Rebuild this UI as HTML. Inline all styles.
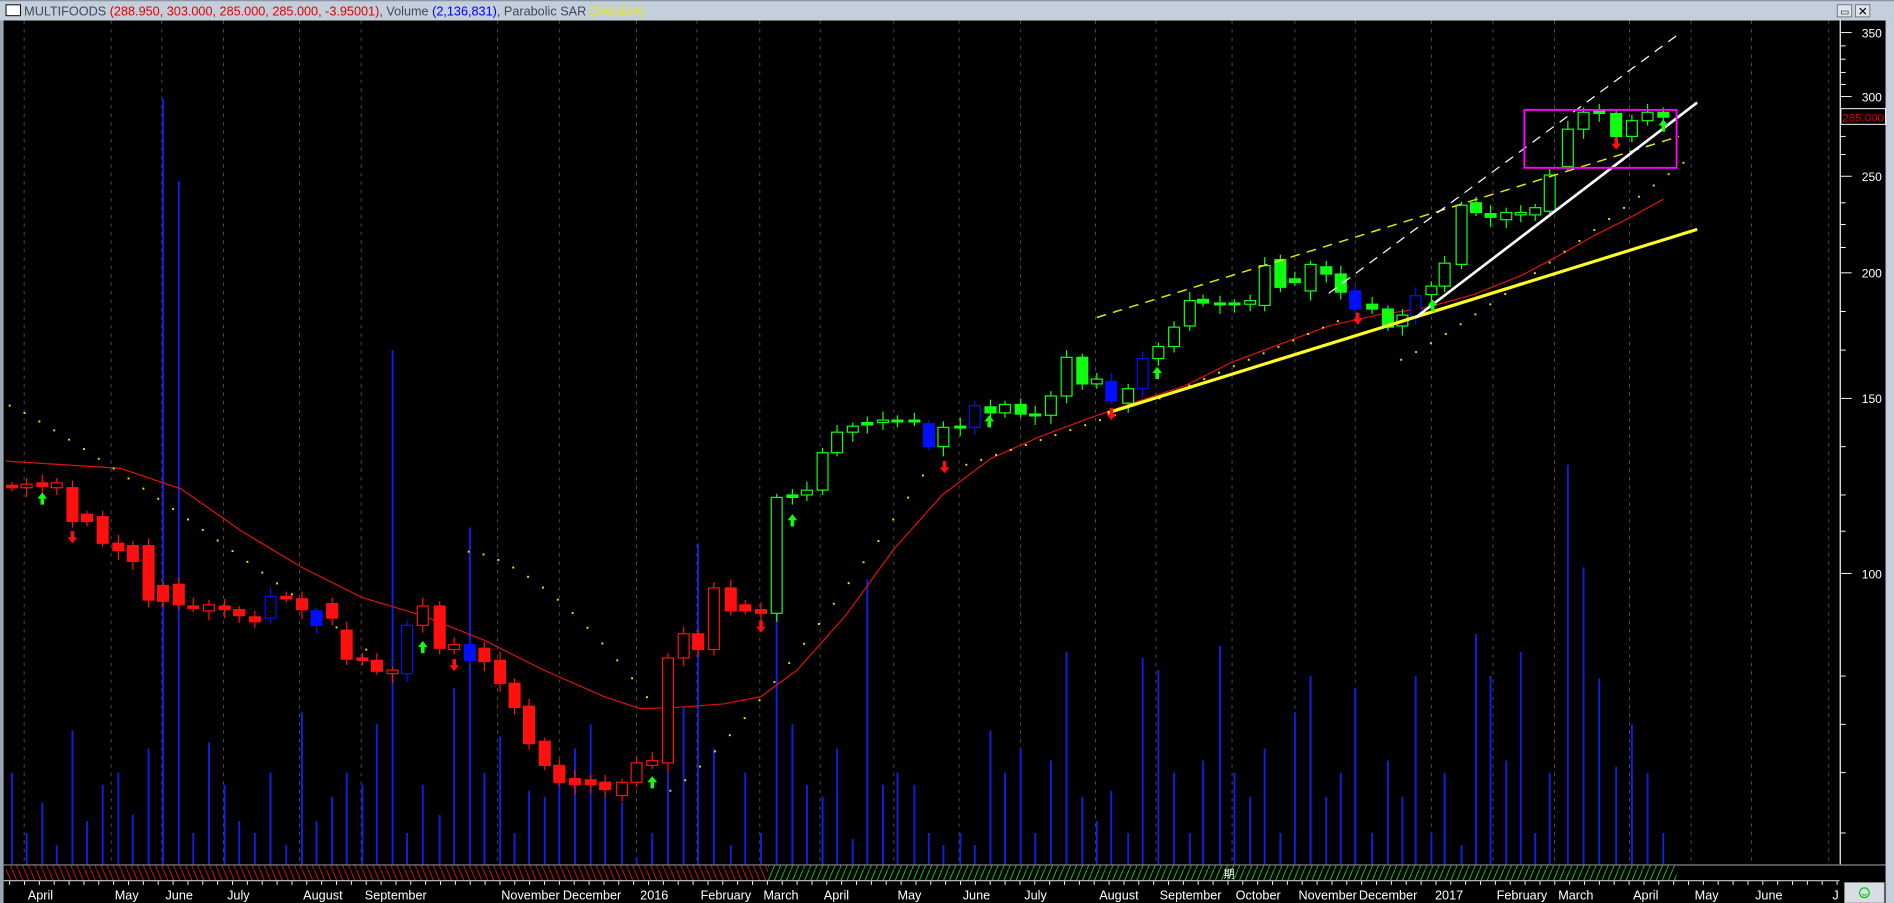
<!DOCTYPE html>
<html><head><meta charset="utf-8">
<style>
html,body{margin:0;padding:0;background:#000;width:1894px;height:903px;overflow:hidden}
svg{display:block}
text{font-family:"Liberation Sans",sans-serif}
</style></head>
<body>
<svg id="c" width="1894" height="903" viewBox="0 0 1568 748" preserveAspectRatio="none" xmlns="http://www.w3.org/2000/svg">
<defs>
<pattern id="hr" width="5" height="12" patternUnits="userSpaceOnUse"><rect width="5" height="12" fill="#000"/><line x1="0" y1="0" x2="5" y2="12" stroke="#e01010" stroke-width="0.8"/></pattern>
<pattern id="hg" width="5" height="12" patternUnits="userSpaceOnUse"><rect width="5" height="12" fill="#000"/><line x1="5" y1="0" x2="0" y2="12" stroke="#10d010" stroke-width="0.8"/></pattern>
</defs>
<rect width="1568" height="748" fill="#000"/>
<rect x="0" y="0" width="1568" height="17" fill="#c4cfdc"/>
<line x1="0" y1="0.5" x2="1568" y2="0.5" stroke="#8a96a4"/>
<rect x="5" y="4" width="12" height="9" fill="#fff" stroke="#000" stroke-width="0.8"/>
<text x="20" y="13" font-size="10.5" fill="#404858">MULTIFOODS <tspan fill="#e00000">(288.950, 303.000, 285.000, 285.000, -3.95001)</tspan>, Volume <tspan fill="#0000ee">(2,136,831)</tspan>, Parabolic SAR <tspan fill="#e8e800">(249.814)</tspan></text>
<rect x="1521" y="4" width="12" height="10" fill="#dfe5ec" stroke="#555" stroke-width="0.6"/>
<rect x="1536" y="4" width="12" height="10" fill="#dfe5ec" stroke="#555" stroke-width="0.6"/>
<text x="1523.5" y="12.5" font-size="8" fill="#000">▭</text>
<text x="1538" y="13" font-size="10" fill="#000">✕</text>
<rect x="0" y="17" width="3" height="731" fill="#9aa4b0"/>
<rect x="1561" y="17" width="7" height="731" fill="#c4cfdc"/>
<g id="grid" stroke="#555" stroke-width="0.7" stroke-dasharray="3,4"></g>
<g id="vol"></g>
<g id="ma"></g>
<g id="sar" fill="#e8e800"></g>
<g id="cand"></g>
<line x1="908" y1="263" x2="1390" y2="113" stroke="#e8e800" stroke-width="1.2" stroke-dasharray="8,6"/>
<line x1="1100" y1="243" x2="1390" y2="28" stroke="#fff" stroke-width="1" stroke-dasharray="8,6"/>
<line x1="917" y1="342" x2="1405" y2="190" stroke="#ffff20" stroke-width="2.6"/>
<line x1="1172" y1="263" x2="1405" y2="85" stroke="#fff" stroke-width="2.2"/>
<rect x="1262" y="91" width="126" height="48" fill="none" stroke="#ff00ff" stroke-width="1.6"/>
<g id="arr"></g>
<line x1="3" y1="716.5" x2="1561" y2="716.5" stroke="#888"/>
<rect x="5" y="717" width="631" height="12" fill="url(#hr)"/>
<rect x="636" y="717" width="752" height="12" fill="url(#hg)"/>
<text x="1013" y="727" font-size="9" fill="#fff">期</text>
<line x1="3" y1="729.5" x2="1523" y2="729.5" stroke="#ccc"/>
<g id="xt" stroke="#fff" stroke-width="0.8"></g>
<g font-size="10.5" fill="#fff" id="xl">
<text x="23" y="745">April</text><text x="95" y="745">May</text><text x="137" y="745">June</text><text x="188" y="745">July</text><text x="251" y="745">August</text><text x="302" y="745">September</text><text x="415" y="745">November</text><text x="466" y="745">December</text><text x="530" y="745">2016</text><text x="580" y="745">February</text><text x="632" y="745">March</text><text x="682" y="745">April</text><text x="743" y="745">May</text><text x="797" y="745">June</text><text x="848" y="745">July</text><text x="910" y="745">August</text><text x="960" y="745">September</text><text x="1023" y="745">October</text><text x="1075" y="745">November</text><text x="1125" y="745">December</text><text x="1188" y="745">2017</text><text x="1239" y="745">February</text><text x="1290" y="745">March</text><text x="1352" y="745">April</text><text x="1403" y="745">May</text><text x="1453" y="745">June</text><text x="1517" y="745">J</text>
</g>
<line x1="1523.5" y1="17" x2="1523.5" y2="716" stroke="#fff"/>
<g id="yt" stroke="#fff" stroke-width="0.8"></g>
<g font-size="10" fill="#fff" text-anchor="end">
<text x="1558" y="31">350</text><text x="1558" y="84">300</text><text x="1558" y="150">250</text><text x="1558" y="230">200</text><text x="1558" y="334">150</text><text x="1558" y="479">100</text>
</g>
<rect x="1524" y="90" width="37" height="13" fill="#000" stroke="#fff" stroke-width="0.8"/>
<text x="1542.5" y="100.5" font-size="9.5" fill="#e00000" text-anchor="middle">285.000</text>
<rect x="1527" y="731" width="33" height="17" fill="#d8dde3" stroke="#888" stroke-width="0.6"/>
<circle cx="1543.5" cy="739.5" r="4" fill="none" stroke="#10c010" stroke-width="1"/>
<path d="M1541.5 740.5 q2 2 4 0" fill="none" stroke="#10c010" stroke-width="0.8"/>
</svg>
<script>
const NS="http://www.w3.org/2000/svg";
function el(p,t,a){const e=document.createElementNS(NS,t);for(const k in a)e.setAttribute(k,a[k]);document.getElementById(p).appendChild(e);return e;}
[20,92,134,185,248,299,412,463,527,577,629,679,740,794,845,907,957,1020,1072,1122,1185,1236,1287,1349,1400,1450,1514].forEach(x=>el('grid','line',{x1:x,y1:17,x2:x,y2:716}));
for(let x=8;x<1523;x+=12.3){el('xt','line',{x1:x,y1:730,x2:x,y2:733});}
[27,80,146,226,330,475].forEach(y=>el('yt','line',{x1:1524,y1:y,x2:1533,y2:y}));
[38,49,60,70,100,113,128,168,186,205,258,290,370,410,440,560,600,640,690].forEach(y=>el('yt','line',{x1:1524,y1:y,x2:1528,y2:y}));
const C=[[10,402,404,'R'],[22,401,404,'O'],[35,400,403,'R'],[47,400,404,'O'],[60,404,432,'R'],[72,426,432,'R'],[85,428,450,'R'],[98,450,456,'R'],[110,452,465,'R'],[123,452,497,'R'],[135,485,498,'R'],[148,484,501,'R'],[160,502,504,'R'],[173,501,506,'O'],[186,502,505,'R'],[198,505,510,'R'],[211,511,515,'R'],[224,494,512,'U'],[237,494,496,'R'],[250,496,505,'R'],[262,506,518,'B'],[275,500,512,'R'],[287,522,546,'R'],[300,545,547,'R'],[312,547,556,'R'],[325,555,558,'O'],[337,518,558,'U'],[350,502,518,'O'],[364,502,537,'R'],[376,534,538,'O'],[389,534,547,'B'],[401,537,548,'R'],[414,547,566,'R'],[426,566,586,'R'],[438,585,616,'R'],[451,614,634,'R'],[463,634,648,'R'],[476,645,650,'R'],[489,646,650,'R'],[501,648,654,'R'],[515,648,659,'O'],[527,632,648,'O'],[540,630,634,'O'],[553,545,632,'O'],[566,525,545,'O'],[578,525,538,'R'],[591,487,538,'O'],[605,487,506,'R'],[617,501,506,'R'],[630,505,508,'R'],[643,412,508,'G'],[656,410,412,'g'],[668,406,410,'G'],[681,375,406,'G'],[693,358,375,'G'],[706,353,358,'G'],[718,350,352,'g'],[731,348,350,'G'],[743,348,349,'g'],
[757,348,349,'g'],[769,351,370,'B'],[781,354,370,'G'],[795,353,354,'g'],[807,336,354,'U'],[820,337,342,'g'],[832,335,342,'G'],[845,335,343,'g'],[857,343,344,'g'],[870,328,344,'G'],[883,296,328,'G'],[896,296,318,'g'],[908,314,318,'G'],[920,316,332,'B'],[934,322,334,'G'],[946,297,322,'U'],[959,287,297,'G'],[972,271,287,'G'],[985,249,270,'G'],[996,248,251,'g'],[1010,251,252,'g'],[1022,251,252,'g'],[1035,249,252,'G'],[1047,220,253,'G'],[1060,215,238,'g'],
[1072,231,234,'g'],[1085,219,241,'G'],[1098,221,227,'g'],[1110,227,242,'g'],[1122,241,256,'B'],[1136,252,256,'g'],[1149,256,271,'g'],[1161,261,270,'G'],[1172,245,262,'U'],[1185,237,244,'G'],[1196,218,237,'G'],[1210,170,219,'G'],[1222,168,176,'g'],[1234,177,180,'g'],[1247,176,182,'G'],[1259,176,178,'G'],[1271,172,178,'G'],[1283,145,175,'G'],[1298,107,138,'G'],[1311,93,107,'G'],[1324,92,94,'g'],[1338,94,113,'g'],[1351,100,113,'G'],[1364,93,100,'G'],[1377,93,97,'g']];
const col={R:'#ff1010',O:'#ff1010',B:'#0010ff',U:'#0010ff',g:'#10ff10',G:'#10ff10'};
const fill={R:1,B:1,g:1,O:0,U:0,G:0};
const VT=[640,690,665,700,605,680,650,640,675,620,82,150,690,615,650,680,690,640,700,590,680,660,640,650,600,290,690,650,675,570,437,640,610,690,655,660,640,620,600,660,665,710,690,640,585,450,620,700,640,690,481,600,650,660,620,695,480,650,640,650,690,700,690,700,605,640,620,690,630,540,660,680,655,690,545,555,640,690,630,535,640,660,620,690,590,560,660,640,570,690,630,660,560,690,640,700,525,560,630,540,690,640,385,470,562,635,600,640,690];
C.forEach((c,i)=>{const [x,t,b,k]=c;const h=Math.max(b-t,1.5);const cl=col[k];
const wt=t-3-(i*7%5),wb=b+3+(i*5%6);
el('cand','line',{x1:x,y1:wt,x2:x,y2:wb,stroke:cl,'stroke-width':1});
el('cand','rect',{x:x-4.5,y:t,width:9,height:h,fill:fill[k]?cl:'#000',stroke:cl,'stroke-width':1});
const vt=VT[i]||680;
el('vol','line',{x1:x,y1:vt,x2:x,y2:716,stroke:'#1020e0','stroke-width':1.6});
});
const ma=[[5,382],[100,388],[150,405],[200,440],[250,470],[300,495],[350,510],[400,530],[450,555],[500,577],[530,587],[560,586],[600,583],[630,577],[660,555],[700,510],[740,455],[780,410],[820,380],[860,362],[900,347],[940,333],[980,320],[1020,300],[1060,285],[1100,270],[1140,261],[1180,255],[1220,244],[1260,228],[1290,212],[1320,195],[1350,180],[1377,165]];
el('ma','polyline',{points:ma.map(p=>p.join(',')).join(' '),fill:'none',stroke:'#e01010','stroke-width':1});
function seg(x0,x1,y0,y1,pow){for(let x=x0;x<=x1;x+=12.3){const t=(x-x0)/(x1-x0);const y=y0+(y1-y0)*Math.pow(t,pow);el('sar','rect',{x:x-0.8,y:y-0.8,width:1.6,height:1.6});}}
seg(8,340,336,566,1.1);seg(388,545,457,590,1.6);seg(555,770,655,385,1.2);seg(800,935,385,340,1);seg(960,1110,330,265,1);seg(1160,1400,298,130,1.1);
function arr(x,y,up){const c=up?'#10ff10':'#ff1010';const d=up?`M${x-4},${y+1} L${x},${y-4} L${x+4},${y+1} L${x+1.5},${y+1} L${x+1.5},${y+6} L${x-1.5},${y+6} L${x-1.5},${y+1}Z`:`M${x-4},${y-1} L${x},${y+4} L${x+4},${y-1} L${x+1.5},${y-1} L${x+1.5},${y-6} L${x-1.5},${y-6} L${x-1.5},${y-1}Z`;el('arr','path',{d:d,fill:c});}
[[35,412,1],[60,446,0],[350,535,1],[376,552,0],[540,647,1],[630,520,0],[656,430,1],[782,388,0],[819,348,1],[920,344,0],[958,308,1],[1124,265,0],[1186,252,1],[1338,120,0],[1377,103,1]].forEach(a=>arr(a[0],a[1],a[2]));
</script>
</body></html>
